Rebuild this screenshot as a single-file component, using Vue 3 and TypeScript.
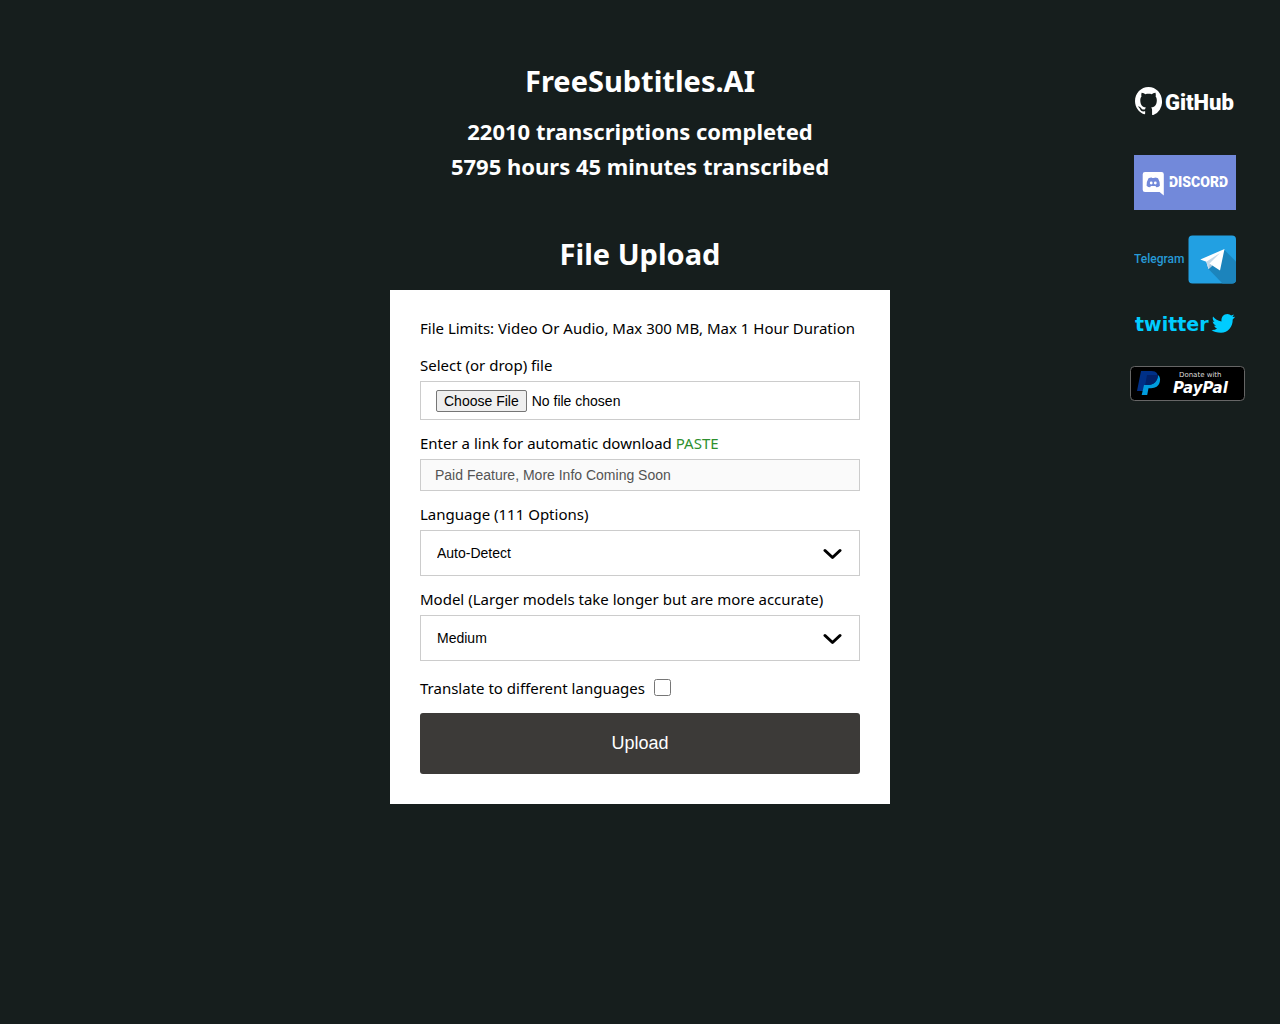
<script setup lang="ts">
import { ref } from 'vue'

const transcriptions = ref(22010)
const hours = ref(5795)
const minutes = ref(45)
const languages = ['Auto-Detect', 'English', 'French', 'German', 'Spanish']
const models = ['Tiny', 'Base', 'Small', 'Medium', 'Large']
const language = ref('Auto-Detect')
const model = ref('Medium')
const translate = ref(false)
const link = ref('')

async function paste() {
  link.value = await navigator.clipboard.readText()
}
</script>

<template>
  <div class="page">
    <main class="content">
      <h1>FreeSubtitles.AI</h1>
      <div class="stats">
        <h2>{{ transcriptions }} transcriptions completed</h2>
        <h2>{{ hours }} hours {{ minutes }} minutes transcribed</h2>
      </div>
      <h1>File Upload</h1>

      <form class="card" @submit.prevent>
        <p class="limits">File Limits: Video Or Audio, Max 300 MB, Max 1 Hour Duration</p>

        <div class="field">
          <label for="file">Select (or drop) file</label>
          <input id="file" class="box file" type="file" />
        </div>

        <div class="field">
          <div class="label-row">
            <label for="link">Enter a link for automatic download</label>
            <button type="button" class="paste" @click="paste">PASTE</button>
          </div>
          <input id="link" v-model="link" class="box link" type="text" placeholder="Paid Feature, More Info Coming Soon" disabled />
        </div>

        <div class="field">
          <label for="language">Language (111 Options)</label>
          <div class="select">
            <select id="language" v-model="language" class="box">
              <option v-for="item in languages" :key="item">{{ item }}</option>
            </select>
            <svg class="chevron" viewBox="0 0 20 12" aria-hidden="true"><path d="M2 2.500 9.500 9.500 17 2.500" /></svg>
          </div>
        </div>

        <div class="field">
          <label for="model">Model (Larger models take longer but are more accurate)</label>
          <div class="select">
            <select id="model" v-model="model" class="box">
              <option v-for="item in models" :key="item">{{ item }}</option>
            </select>
            <svg class="chevron" viewBox="0 0 20 12" aria-hidden="true"><path d="M2 2.500 9.500 9.500 17 2.500" /></svg>
          </div>
        </div>

        <div class="translate">
          <label for="translate">Translate to different languages</label>
          <input id="translate" v-model="translate" type="checkbox" />
        </div>

        <button type="submit" class="upload">Upload</button>
      </form>
    </main>

    <nav class="links" aria-label="Community">
      <a href="#github" aria-label="GitHub">
        <svg width="102" height="58" viewBox="0 0 102 58">
          <svg x="1" y="15" width="27" height="28" viewBox="0 0 16 16" preserveAspectRatio="none">
            <path fill="#fff" d="M8 0C3.580 0 0 3.580 0 8c0 3.540 2.290 6.530 5.470 7.590.4.070.55-.17.55-.38V13.900c-2.010.370-2.730-.490-2.990-1.140-.09-.23-.48-.94-.82-1.130-.28-.15-.68-.52-.01-.53.63-.01 1.080.58 1.230.82.720 1.210 1.770 1.070 2.530.86.070-.52.280-.87.510-1.070-1.780-.2-3.340-1.090-3.340-4.150 0-.87.210-1.590.720-2.150-.08-.2-.26-1.020.08-2.120 0 0 .870-.01 2.200.820.640-.18 1.220-.27 1.900-.27s1.260.090 1.900.270c1.330-.84 2.200-.820 2.200-.820.340 1.100.160 1.920.080 2.120.510.560.720 1.270.720 2.150 0 3.070-1.570 3.950-3.350 4.150.290.250.540.730.540 1.480v2.500c0 .21.150.46.550.38A8.010 8.010 0 0 0 16 8c0-4.420-3.580-8-8-8z" />
          </svg>
          <text class="github" x="31" y="38">GitHub</text>
        </svg>
      </a>
      <a href="#discord" aria-label="Discord">
        <svg width="102" height="55" viewBox="0 0 102 55">
          <rect width="102" height="55" fill="#7289da" />
          <path fill="#fff" d="M11 17h16.500a2.300 2.300 0 0 1 2.300 2.300V40.500l-4.200-3.500H11a2.300 2.300 0 0 1-2.300-2.300V19.300A2.300 2.300 0 0 1 11 17z" />
          <path fill="#7289da" d="M14.500 23.300q1.600-1 3.200-.9l.4.700h2.300l.4-.7q1.700 0 3.200.9 2 3.300 1.900 7.400-1.500 1.500-3.600 1.500l-.8-1.200h-4.600l-.8 1.200q-2.100 0-3.500-1.500-.1-4.200 1.900-7.400z" />
          <circle cx="17.200" cy="28" r="1.400" fill="#fff" />
          <circle cx="21.300" cy="28" r="1.400" fill="#fff" />
          <text class="discord" x="35" y="32">DISCORD</text>
          <path fill="#7289da" d="M35 24.500h3.800v2H35zM84.500 24.500h3.800v2h-3.800z" />
        </svg>
      </a>
      <a href="#telegram" aria-label="Telegram">
        <svg width="102" height="49" viewBox="0 0 102 49">
          <text class="telegram" x="0" y="28">Telegram</text>
          <rect x="54.500" y=".5" width="47.500" height="48" rx="4" fill="#22a0e2" />
          <path fill="#1c84bc" d="M90 14.500 102 26.500V44.500a4 4 0 0 1-4 4H88.500L74.500 34z" />
          <path fill="#fff" d="M66.300 24.500 90.500 14 86 35.500 78.300 30.500 74.500 34l-2.200-7.200z" />
          <path fill="#c4d8e8" d="M72.300 26.800 86 18 75.500 28.500 74.500 34z" />
          <path fill="#a9c6de" d="M74.500 34 75.500 28.500l2.800 2z" />
        </svg>
      </a>
      <a href="#twitter" aria-label="Twitter">
        <svg width="102" height="32" viewBox="0 0 102 32">
          <text class="twitter" x="1" y="22">twitter</text>
          <path fill="#00ccff" d="M79 7.500Q82 11.500 87.500 12.500C87 8 89.500 5 93.500 5q2.200 0 3.700 1.500L100 5.500 98.500 8l2.700-.2L98.700 10.500C99 17.500 94 23.800 87 23.800Q81 23.800 77.500 21q3.500.2 5.500-1.500Q81 19 80 16.800h2Q79 15 78.500 12.500l2 .4Q78 10.500 79 7.500z" />
        </svg>
      </a>
      <a class="paypal" href="#paypal" aria-label="Donate with PayPal">
        <svg width="115" height="35" viewBox="0 0 115 35">
          <rect x=".5" y=".5" width="114" height="34" rx="4" fill="#000" stroke="#666" />
          <path fill="#003087" d="M11 5h10.500c5 0 7 3 6 7.300-1.100 4.700-4.500 6.700-9.300 6.700h-3l-1.200 6H7z" />
          <path fill="#009cde" d="M28 9c2 1.500 2.500 4 1.800 6.800-1.100 4.700-4.500 6.400-8.700 6.400h-2.600L17.200 29h-5.500l2.300-10h4.200c5.200 0 9.300-3.500 9.800-10z" />
          <path fill="#012169" d="M17 9h9q1.200 0 2 .6c-.5 6-4.200 9.400-9.800 9.400h-3z" />
          <text class="donate" x="49" y="11">Donate with</text>
          <text class="brand" x="43" y="27">PayPal</text>
        </svg>
      </a>
    </nav>
  </div>
</template>

<style>
body {
  background: #161e1d;
}
</style>

<style scoped>
.page {
  display: grid;
  grid-template-columns: 1fr minmax(auto, 500px) 1fr;
  font-family: "Lucida Grande", "Noto Sans", sans-serif;
  font-size: 15px;
  color: #000;
}

.content {
  grid-column: 2;
  padding-top: 61px;
}

h1,
h2 {
  margin: 0;
  color: #fff;
  text-align: center;
  white-space: nowrap;
}

h1 {
  font-size: 29px;
  line-height: 40px;
}

h2 {
  font-size: 22px;
  line-height: 35px;
}

.stats {
  margin: 13px 0 50px;
}

.card {
  display: flex;
  flex-direction: column;
  gap: 15px;
  margin-top: 16px;
  padding: 30px;
  background: #fff;
}

.limits {
  margin: 0 0 6px;
  line-height: 16px;
  white-space: nowrap;
}

.field {
  display: flex;
  flex-direction: column;
  gap: 8px;
  line-height: 16px;
}

.label-row {
  display: flex;
  gap: 4px;
}

.paste {
  padding: 0;
  border: 0;
  background: none;
  color: #2e8f2e;
  font: inherit;
  line-height: 16px;
  cursor: pointer;
}

.box {
  box-sizing: border-box;
  width: 100%;
  margin: 0;
  border: 1px solid #ccc;
  border-radius: 0;
  background: #fff;
  color: #000;
  font-family: Arial, "Liberation Sans", sans-serif;
  font-size: 14px;
}

.file {
  height: 39px;
  padding: 8px 15px;
  line-height: 20px;
}

.file::file-selector-button {
  box-sizing: border-box;
  height: 22px;
  margin: 0 5px 0 0;
  padding: 0 7px;
  border: 1px solid #767676;
  border-radius: 2px;
  background: #efefef;
  color: #000;
  font: inherit;
}

.link {
  height: 32px;
  padding: 0 14px;
  background: #fafafa;
}

.link::placeholder {
  color: #545454;
}

.select {
  position: relative;
}

select.box {
  display: block;
  height: 46px;
  padding: 0 16px;
  appearance: none;
}

.chevron {
  position: absolute;
  top: 18px;
  right: 17px;
  width: 20px;
  height: 12px;
  fill: none;
  stroke: #000;
  stroke-width: 3;
  stroke-linecap: round;
  stroke-linejoin: round;
  pointer-events: none;
}

.translate {
  display: flex;
  align-items: center;
  gap: 9px;
  margin: 3px 0 2px;
  line-height: 16px;
}

.translate input {
  width: 17px;
  height: 17px;
  margin: 0;
}

.upload {
  height: 61px;
  border: 0;
  border-radius: 3px;
  background: #3c3a38;
  color: #fff;
  font-family: Arial, "Liberation Sans", sans-serif;
  font-size: 18px;
}

.links {
  display: flex;
  flex-direction: column;
  align-items: center;
  gap: 25px;
  justify-self: end;
  width: 110px;
  margin: 72px 40px 0 0;
}

.links a,
.links svg {
  display: block;
}

.paypal {
  align-self: flex-start;
}

.github {
  fill: #fff;
  font: 900 22px Roboto, sans-serif;
}

.discord {
  fill: #fff;
  font: 900 14px Roboto, sans-serif;
}

.telegram {
  fill: #2699d6;
  font: 500 12px Roboto, sans-serif;
}

.twitter {
  fill: #00ccff;
  font: 700 19px "DejaVu Sans", sans-serif;
}

.donate {
  fill: #ddd;
  font: 7px "DejaVu Sans", sans-serif;
}

.brand {
  fill: #fff;
  font: italic 700 15px "DejaVu Sans", sans-serif;
}
</style>
